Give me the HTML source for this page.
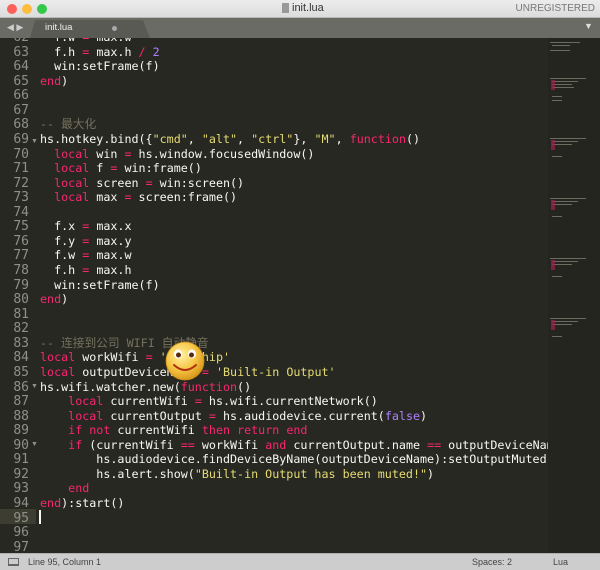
<!DOCTYPE html>
<html><head><meta charset="utf-8"><style>
*{margin:0;padding:0;box-sizing:border-box}
body{width:600px;height:570px;overflow:hidden;background:#272822;position:relative;font-family:"Liberation Sans",sans-serif}
#title{position:absolute;left:0;top:0;width:600px;height:18px;background:linear-gradient(#ececec,#dcdcdc);border-bottom:1px solid #b8b8b8}
.dot{position:absolute;top:4px;width:10px;height:10px;border-radius:50%}
#tabbar{position:absolute;left:0;top:18px;width:600px;height:20px;background:#6b6b66}
#tab{position:absolute;left:30px;top:2px;width:120px;height:18px;background:#5a5a55;clip-path:polygon(5px 0,113px 0,120px 18px,0 18px)}
#ed{position:absolute;left:0;top:38px;width:600px;height:515px;overflow:hidden}
#gut{position:absolute;left:0;top:-7px;width:29px;text-align:right;font:13px/14.56px "DejaVu Sans Mono",monospace;color:#8f908a}
#code{position:absolute;left:40px;top:-8px;width:508px;overflow:hidden;white-space:pre;font:11.7px/14.56px "DejaVu Sans Mono","Noto Sans CJK SC",monospace;color:#f8f8f2}
.k{color:#f92672}.s{color:#e6db74}.n{color:#ae81ff}.c{color:#75715e}
#mini{position:absolute;left:548px;top:38px;width:52px;height:515px;background:#24251f}
#status{position:absolute;left:0;top:553px;width:600px;height:17px;background:#cdcdcd;border-top:1px solid #b0b0b0;font-size:9px;color:#444}
</style></head><body>
<div id="title">
<div class="dot" style="left:7px;background:#fc605c"></div>
<div class="dot" style="left:22px;background:#fdbc40"></div>
<div class="dot" style="left:37px;background:#34c84a"></div>
<div style="position:absolute;left:282px;top:3px;width:7px;height:10px;background:#999"></div>
<div style="position:absolute;left:292px;top:2px;font-size:11px;color:#333">init.lua</div>
<div style="position:absolute;right:5px;top:3px;font-size:10px;color:#777">UNREGISTERED</div>
</div>
<div id="tabbar">
<div style="position:absolute;left:7px;top:4px;font-size:9px;color:#ccc">◀ ▶</div>
<div id="tab"></div>
<div style="position:absolute;left:45px;top:4px;font-size:9.5px;color:#eee">init.lua</div>
<div style="position:absolute;left:112px;top:8px;width:5px;height:5px;border-radius:50%;background:#aaa"></div>
<div style="position:absolute;left:584px;top:3px;font-size:9px;color:#ddd">▼</div>
</div>
<div id="ed">
<div style="position:absolute;left:0;top:471px;width:36px;height:14.56px;background:#3e3d32"></div>
<div id="gut">62<br>63<br>64<br>65<br>66<br>67<br>68<br>69<br>70<br>71<br>72<br>73<br>74<br>75<br>76<br>77<br>78<br>79<br>80<br>81<br>82<br>83<br>84<br>85<br>86<br>87<br>88<br>89<br>90<br>91<br>92<br>93<br>94<br>95<br>96<br>97</div>
<div style="position:absolute;left:31px;top:97px;font-size:7px;color:#8f908a;line-height:14.56px">▼</div>
<div style="position:absolute;left:31px;top:345px;font-size:7px;color:#8f908a">▼</div>
<div style="position:absolute;left:31px;top:403px;font-size:7px;color:#8f908a">▼</div>
<div id="code">  f.w <span class="k">=</span> max.w
  f.h <span class="k">=</span> max.h <span class="k">/</span> <span class="n">2</span>
  win:setFrame(f)
<span class="k">end</span>)


<span class="c">-- 最大化</span>
hs.hotkey.bind({<span class="s">"cmd"</span>, <span class="s">"alt"</span>, <span class="s">"ctrl"</span>}, <span class="s">"M"</span>, <span class="k">function</span>()
  <span class="k">local</span> win <span class="k">=</span> hs.window.focusedWindow()
  <span class="k">local</span> f <span class="k">=</span> win:frame()
  <span class="k">local</span> screen <span class="k">=</span> win:screen()
  <span class="k">local</span> max <span class="k">=</span> screen:frame()

  f.x <span class="k">=</span> max.x
  f.y <span class="k">=</span> max.y
  f.w <span class="k">=</span> max.w
  f.h <span class="k">=</span> max.h
  win:setFrame(f)
<span class="k">end</span>)


<span class="c">-- 连接到公司 WIFI 自动静音</span>
<span class="k">local</span> workWifi <span class="k">=</span> <span class="s">'Bee-ship'</span>
<span class="k">local</span> outputDeviceName <span class="k">=</span> <span class="s">'Built-in Output'</span>
hs.wifi.watcher.new(<span class="k">function</span>()
    <span class="k">local</span> currentWifi <span class="k">=</span> hs.wifi.currentNetwork()
    <span class="k">local</span> currentOutput <span class="k">=</span> hs.audiodevice.current(<span class="n">false</span>)
    <span class="k">if not</span> currentWifi <span class="k">then return end</span>
    <span class="k">if</span> (currentWifi <span class="k">==</span> workWifi <span class="k">and</span> currentOutput.name <span class="k">==</span> outputDeviceName) <span class="k">then</span>
        hs.audiodevice.findDeviceByName(outputDeviceName):setOutputMuted(<span class="n">true</span>)
        hs.alert.show(<span class="s">"Built-in Output has been muted!"</span>)
    <span class="k">end</span>
<span class="k">end</span>):start()
</div>
<div style="position:absolute;left:39px;top:472px;width:1.5px;height:14px;background:#f8f8f0"></div>
<svg style="position:absolute;left:165px;top:303px" width="40" height="40" viewBox="0 0 40 40">
<defs><radialGradient id="g" cx="40%" cy="35%" r="65%"><stop offset="0" stop-color="#fff2a0"/><stop offset="0.6" stop-color="#f6c545"/><stop offset="1" stop-color="#d99a1c"/></radialGradient></defs>
<circle cx="20" cy="20" r="19" fill="url(#g)" stroke="#c88a18" stroke-width="0.8"/>
<ellipse cx="13" cy="13" rx="4" ry="4.5" fill="#fff"/><ellipse cx="27" cy="13" rx="4" ry="4.5" fill="#fff"/>
<circle cx="13.5" cy="14" r="2.5" fill="#5a2a10"/><circle cx="26.5" cy="14" r="2.5" fill="#5a2a10"/>
<path d="M9 24 Q20 34 31 24" fill="none" stroke="#b03010" stroke-width="2" stroke-linecap="round"/>
</svg>
</div>
<div id="mini">
<svg width="52" height="515">
<g fill="#8a8a7a" opacity="0.7">
<rect x="2" y="4" width="30" height="1"/><rect x="4" y="7" width="18" height="1"/><rect x="2" y="12" width="20" height="1"/>
<rect x="2" y="40" width="36" height="1"/><rect x="4" y="43" width="26" height="1"/><rect x="4" y="46" width="20" height="1"/><rect x="4" y="49" width="22" height="1"/><rect x="4" y="58" width="10" height="1"/><rect x="4" y="62" width="10" height="1"/>
<rect x="2" y="100" width="36" height="1"/><rect x="4" y="103" width="26" height="1"/><rect x="4" y="106" width="20" height="1"/><rect x="4" y="118" width="10" height="1"/>
<rect x="2" y="160" width="36" height="1"/><rect x="4" y="163" width="26" height="1"/><rect x="4" y="166" width="20" height="1"/><rect x="4" y="178" width="10" height="1"/>
<rect x="2" y="220" width="36" height="1"/><rect x="4" y="223" width="26" height="1"/><rect x="4" y="226" width="20" height="1"/><rect x="4" y="238" width="10" height="1"/>
<rect x="2" y="280" width="36" height="1"/><rect x="4" y="283" width="26" height="1"/><rect x="4" y="286" width="20" height="1"/><rect x="4" y="298" width="10" height="1"/>
</g>
<g fill="#a02050" opacity="0.7"><rect x="3" y="42" width="4" height="10"/><rect x="3" y="102" width="4" height="10"/><rect x="3" y="162" width="4" height="10"/><rect x="3" y="222" width="4" height="10"/><rect x="3" y="282" width="4" height="10"/></g>
</svg></div>
<div id="status">
<div style="position:absolute;left:8px;top:4px;width:11px;height:8px;border:1px solid #666;border-bottom-width:2px"></div>
<div style="position:absolute;left:28px;top:3px">Line 95, Column 1</div>
<div style="position:absolute;left:472px;top:3px">Spaces: 2</div>
<div style="position:absolute;left:553px;top:3px">Lua</div>
</div>
</body></html>
